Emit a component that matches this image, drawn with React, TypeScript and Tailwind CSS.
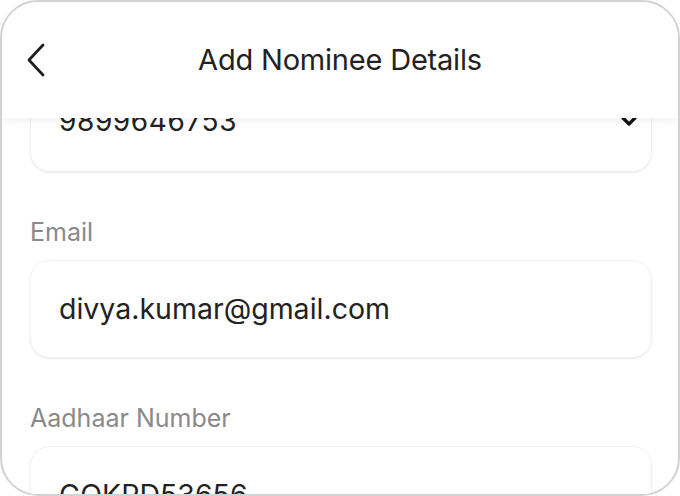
const fields = [
  { label: "Email", value: "divya.kumar@gmail.com" },
  { label: "Aadhaar Number", value: "GOKPD53656" },
];

export default function App() {
  return (
    <div className="h-[496px] w-[680px] bg-white font-['Inter',sans-serif]">
      <div className="relative flex h-full w-full flex-col overflow-hidden rounded-[38px] border-2 border-[#d2d2d2] bg-white">
        {/* Header */}
        <header className="relative z-10 grid h-[116px] shrink-0 grid-cols-[64px_1fr_64px] items-center bg-white shadow-[0_4px_8px_rgba(0,0,0,0.05)]">
          <button className="flex h-[34px] items-center pl-[24px] text-[#1f1f1f]">
            <svg width="20" height="34" viewBox="0 0 20 34">
              <path d="M17 2L3 17l14 15" fill="none" stroke="currentColor" strokeWidth="2.8" strokeLinecap="round" strokeLinejoin="round" />
            </svg>
          </button>
          <h1 className="text-center text-[29px] font-[440] tracking-[-0.2px] text-[#222]">
            Add Nominee Details
          </h1>
          <span />
        </header>

        {/* Form */}
        <div className="flex flex-col pl-[28px] pr-[26px]">
          {/* Phone (scrolled under header) */}
          <div className="-mt-[44px] flex h-[98px] items-center justify-between rounded-[20px] border border-[#f0f0f0] bg-white pl-[28px] pr-[14px] shadow-[0_1px_2px_rgba(0,0,0,0.08)]">
            <span className="mt-[-4px] text-[28px] tracking-[0.6px] text-[#222]">9899646753</span>
            <svg width="16" height="10" viewBox="0 0 16 10" className="-mt-[4px]">
              <path d="M2 2l6 6 6-6" fill="none" stroke="#111" strokeWidth="3.2" strokeLinecap="round" strokeLinejoin="round" />
            </svg>
          </div>

          {fields.map(({ label, value }) => (
            <div key={label} className="mt-[44px] flex flex-col">
              <label className="h-[32px] text-[25px] leading-[32px] text-[#8a8a8a]">{label}</label>
              <div className="mt-[12px] flex h-[98px] shrink-0 items-center rounded-[20px] border border-[#f2f2f2] bg-white px-[28px] shadow-[0_1px_2px_rgba(0,0,0,0.08)]">
                <span className="text-[28.5px] text-[#222]">{value}</span>
              </div>
            </div>
          ))}
        </div>
      </div>
    </div>
  );
}
